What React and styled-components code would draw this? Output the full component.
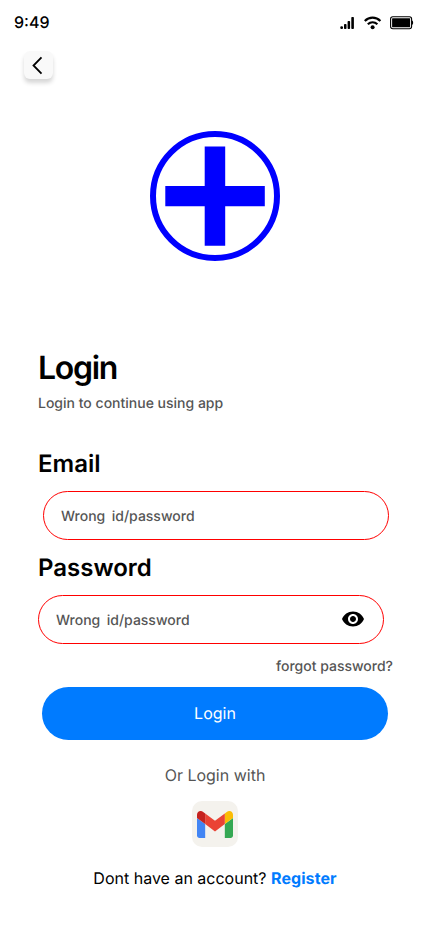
import React from "react";
import styled, { createGlobalStyle } from "styled-components";

const GlobalStyle = createGlobalStyle`
  * { box-sizing: border-box; }
  body {
    margin: 0;
    background: #fff;
    font-family: Inter, "Liberation Sans", sans-serif;
    text-rendering: geometricPrecision;
  }
`;

const Screen = styled.div`
  width: 430px;
  height: 932px;
  background: #fff;
  display: flex;
  flex-direction: column;
  color: #000;
  overflow: hidden;
`;

const StatusBar = styled.header`
  height: 44px;
  flex: none;
  display: flex;
  justify-content: space-between;
  padding: 0 16px 0 14px;
  align-items: center;
`;

const Clock = styled.time`
  font-size: 16px;
  line-height: 20px;
  font-weight: 500;
`;

const StatusIcons = styled.div`
  display: flex;
  align-items: center;
  gap: 8px;
  padding-top: 1px;
`;

const BackButton = styled.button`
  width: 29px;
  height: 28px;
  flex: none;
  margin: 7px 0 0 24px;
  padding: 0;
  border: 0;
  border-radius: 6px;
  background: #f9f9f9;
  box-shadow: 0 4px 4px rgba(0, 0, 0, 0.16);
  svg { display: block; }
`;

const Logo = styled.svg`
  display: block;
  flex: none;
  margin: 52px auto 0 150px;
`;

const Form = styled.form`
  display: flex;
  flex-direction: column;
  margin-top: 87px;
  padding: 0 37px 0 38px;
`;

const Title = styled.h1`
  margin: 0;
  font-size: 32px;
  line-height: 40px;
  font-weight: 600;
  letter-spacing: -1.28px;
`;

const Subtitle = styled.p`
  margin: 7px 0 0;
  font-size: 14px;
  line-height: 18px;
  font-weight: 500;
  color: #555;
`;

const Label = styled.label`
  margin-top: ${(p) => p.$gap}px;
  font-size: 24px;
  line-height: 30px;
  font-weight: 600;
`;

const Field = styled.div`
  display: flex;
  align-items: center;
  justify-content: space-between;
  width: 346px;
  height: 49px;
  margin: 12px 0 0 ${(p) => p.$indent || 0}px;
  padding: 0 18px 0 17px;
  border: 1px solid #ff0000;
  border-radius: 25px;
  font-size: 14px;
  font-weight: 500;
  color: #555;
  white-space: pre;
`;

const FieldText = styled.span`
  padding-top: 2px;
  word-spacing: -0.5px;
`;

const EyeIcon = styled.svg`
  display: block;
  margin-bottom: 1px;
`;

const Forgot = styled.a`
  align-self: flex-end;
  margin-top: 14px;
  font-size: 14px;
  line-height: 18px;
  font-weight: 500;
  color: #555;
`;

const Submit = styled.button`
  width: 346px;
  height: 53px;
  margin: 11px 0 0 4px;
  padding: 0 0 2px;
  border: 0;
  border-radius: 27px;
  background: #007bff;
  color: #fff;
  font: 400 16px/20px Inter, sans-serif;
  text-rendering: geometricPrecision;
`;

const Alternative = styled.section`
  display: flex;
  flex-direction: column;
  align-items: center;
  margin-top: 25px;
`;

const Caption = styled.p`
  margin: 0;
  font-size: 16px;
  line-height: 20px;
  color: #555;
`;

const GmailButton = styled.button`
  width: 46px;
  height: 46px;
  margin-top: 16px;
  padding: 0;
  border: 0;
  border-radius: 10px;
  background: #f4f2ed;
  svg { display: block; margin: 0 auto; }
`;

const RegisterLine = styled.p`
  margin: 21px 0 0;
  font-size: 16px;
  line-height: 20px;
`;

const RegisterLink = styled.a`
  color: #007bff;
  font-weight: 700;
  letter-spacing: 0.08px;
`;

const SignalIcon = () => (
  <svg width="16" height="14" viewBox="0 0 16 14">
    <rect x="0.3" y="10.2" width="2.7" height="2.8" rx="1.1" />
    <rect x="4" y="8" width="2.5" height="5" rx="0.8" />
    <rect x="7.6" y="5" width="2.5" height="8" rx="0.8" />
    <rect x="11.3" y="1" width="2.6" height="12" rx="0.8" />
  </svg>
);

const WifiIcon = () => (
  <svg width="18" height="14" viewBox="0.5 0 18 14" fill="none" stroke="#000" strokeWidth="2.2">
    <path d="M1.3 5C5.7.5 12.5.5 16.9 5" />
    <path d="M4.3 8.3c2.8-2.6 6.8-2.6 9.6 0" />
    <circle cx="9.1" cy="11.2" r="2" fill="#000" stroke="none" />
  </svg>
);

const BatteryIcon = () => (
  <svg width="24" height="14" viewBox="0 0 24 14">
    <rect x="0.6" y="0.7" width="21" height="12" rx="2.2" fill="none" stroke="#000" strokeWidth="1.1" />
    <rect x="2.1" y="2.2" width="18" height="9" rx="0.5" />
    <path d="M22 4.6c1.5.5 1.5 3.9 0 4.4z" />
  </svg>
);

export default function App() {
  return (
    <>
      <GlobalStyle />
      <Screen>
        <StatusBar>
          <Clock>9:49</Clock>
          <StatusIcons>
            <SignalIcon />
            <WifiIcon />
            <BatteryIcon />
          </StatusIcons>
        </StatusBar>
        <BackButton type="button" aria-label="Back">
          <svg width="29" height="28" viewBox="0 0 29 28" fill="none" stroke="#000" strokeWidth="1.8">
            <path d="M17.5 6.3 9.5 14.5 17.5 22.7" />
          </svg>
        </BackButton>
        <Logo width="130" height="130" viewBox="0 0 130 130">
          <circle cx="65" cy="65" r="62" fill="none" stroke="#00f" strokeWidth="6" />
          <path d="M54.7 15.4h20.5V55H114.8v20.2H75.2v39.6H54.7V75.2H15.3V55h39.4z" fill="#00f" />
        </Logo>
        <Form>
          <Title>Login</Title>
          <Subtitle>Login to continue using app</Subtitle>
          <Label $gap={36}>Email</Label>
          <Field $indent={5}>
            <FieldText>{"Wrong  id/password"}</FieldText>
          </Field>
          <Label $gap={13}>Password</Label>
          <Field>
            <FieldText>{"Wrong  id/password"}</FieldText>
            <EyeIcon width="24" height="24" viewBox="0 0 24 24">
              <path d="M12 4.5C7 4.5 2.73 7.61 1 12c1.73 4.39 6 7.5 11 7.5s9.27-3.11 11-7.5c-1.73-4.39-6-7.5-11-7.5zM12 17c-2.76 0-5-2.24-5-5s2.24-5 5-5 5 2.24 5 5-2.24 5-5 5zm0-8c-1.66 0-3 1.34-3 3s1.34 3 3 3 3-1.34 3-3-1.34-3-3-3z" />
            </EyeIcon>
          </Field>
          <Forgot>forgot password?</Forgot>
          <Submit type="button">Login</Submit>
        </Form>
        <Alternative>
          <Caption>Or Login with</Caption>
          <GmailButton type="button" aria-label="Gmail">
            <svg width="36" height="27" viewBox="52 42 88 66">
              <path fill="#4285f4" d="M58 108h14V74L52 59v43c0 3.32 2.69 6 6 6" />
              <path fill="#34a853" d="M120 108h14c3.32 0 6-2.69 6-6V59l-20 15" />
              <path fill="#fbbc04" d="M120 48v26l20-15v-8c0-7.42-8.47-11.65-14.4-7.2" />
              <path fill="#ea4335" d="M72 74V48l24 18 24-18v26L96 92" />
              <path fill="#c5221f" d="M52 51v8l20 15V48l-5.6-4.2c-5.94-4.45-14.4-.22-14.4 7.2" />
            </svg>
          </GmailButton>
          <RegisterLine>
            Dont have an account? <RegisterLink>Register</RegisterLink>
          </RegisterLine>
        </Alternative>
      </Screen>
    </>
  );
}
